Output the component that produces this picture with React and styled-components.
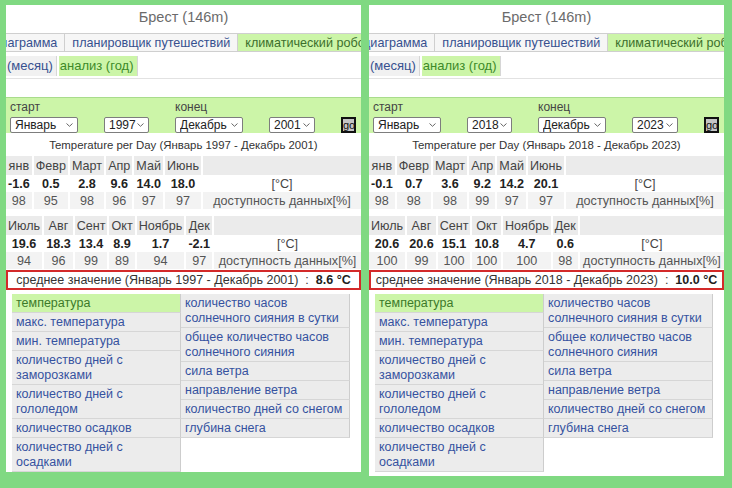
import React from "react";
import styled, { createGlobalStyle } from "styled-components";

const GlobalStyle = createGlobalStyle`
  html, body {
    margin: 0;
    padding: 0;
    background: #80d982;
  }
  body {
    width: 732px;
    height: 488px;
    overflow: hidden;
    font-family: "Liberation Sans", Arial, sans-serif;
  }
`;

const Page = styled.div`
  display: flex;
  align-items: flex-start;
  gap: 8px;
  padding: 5px 0 0 6px;
`;

const Panel = styled.div`
  width: 355px;
  background: #fff;
  overflow: hidden;
  padding-bottom: ${(p) => p.$pad || 0}px;
`;

const Title = styled.div`
  height: 28px;
  padding-top: 2px;
  box-sizing: border-box;
  line-height: 20px;
  text-align: center;
  font-size: 14.5px;
  color: #6b6b6b;
`;

const TabBar = styled.div`
  display: flex;
  height: 18px;
  border-bottom: 1px solid #cfcfcf;
  margin-left: ${(p) => p.$shift}px;
  white-space: nowrap;
`;

const Tab = styled.div`
  flex: none;
  padding: 0 7px;
  line-height: 18px;
  font-size: 12.6px;
  border: 1px solid #cfcfcf;
  border-bottom: none;
  margin-right: -1px;
  background: ${(p) => (p.$active ? "#ccf5a8" : "#f6f6f6")};
  color: ${(p) => (p.$active ? "#3c6f2c" : "#36508f")};
`;

const SubBar = styled.div`
  display: flex;
  gap: 2px;
  height: 20px;
  margin-top: 4px;
  padding-bottom: 2px;
  border-bottom: 1px solid #e2e2e2;
  margin-bottom: 18px;
`;

const SubTab = styled.div`
  padding: 0 3px 0 1px;
  line-height: 20px;
  font-size: 13px;
  background: ${(p) => (p.$active ? "#ccf5a8" : "#f1f1f1")};
  color: ${(p) => (p.$active ? "#3d8a28" : "#36508f")};
  border-right: 1px solid #d6d6d6;
`;

const Form = styled.div`
  display: grid;
  grid-template-columns: 68px 45px 68px 46px 15px;
  column-gap: 26px;
  row-gap: 2px;
  align-items: end;
  height: 36px;
  box-sizing: border-box;
  padding: 2px 0 0 4px;
  background: #ccf5a8;
  border-top: 1px solid #a9dc8c;
`;

const FieldLabel = styled.div`
  grid-column: ${(p) => p.$col};
  grid-row: 1;
  font-size: 12px;
  line-height: 13px;
  color: #454545;
`;

const SelectBox = styled.div`
  grid-row: 2;
  position: relative;
  height: 16px;
`;

const Select = styled.select`
  appearance: none;
  display: block;
  width: 100%;
  height: 16px;
  padding: 0 12px 0 4px;
  font-size: 12px;
  font-family: "Liberation Sans", Arial, sans-serif;
  color: #222;
  background: #fff;
  border: 1px solid #7d7d7d;
  border-radius: 2px;
`;

const Chevron = styled.svg`
  position: absolute;
  right: 5px;
  top: 6px;
  width: 7px;
  height: 4px;
  pointer-events: none;
`;

const GoButton = styled.button`
  grid-row: 2;
  width: 15px;
  height: 16px;
  padding: 0;
  font-size: 11px;
  line-height: 10px;
  font-family: "Liberation Sans", Arial, sans-serif;
  background: #c4c4c4;
  border: 2px solid #111;
  color: #111;
`;

const TableTitle = styled.div`
  margin-top: 2px;
  line-height: 20px;
  text-align: center;
  font-size: 11.4px;
  color: #333;
`;

const Table = styled.table`
  width: 359px;
  border-collapse: separate;
  border-spacing: 2px 0;
  margin: ${(p) => p.$top || 0}px 0 0 -2px;
  font-size: 12.6px;
`;

const Cell = styled.td`
  padding: 0 2px;
  height: ${(p) => (p.$kind === "head" ? 19 : 17)}px;
  text-align: center;
  white-space: nowrap;
  font-weight: ${(p) => (p.$kind === "val" ? "bold" : "normal")};
  background: ${(p) =>
    p.$kind === "head" ? "#ebebeb" : p.$kind === "avail" ? "#f3f3f3" : "#fff"};
  color: ${(p) => (p.$kind === "val" ? "#222" : p.$kind === "avail" ? "#555" : "#444")};
  width: ${(p) => (p.$wide ? "100%" : "auto")};
`;

const Average = styled.div`
  margin-top: 1px;
  height: 20px;
  box-sizing: border-box;
  border: 2px solid #d32a2a;
  line-height: 16px;
  text-align: center;
  font-size: 12.5px;
  color: #333;
  white-space: nowrap;
  b {
    color: #1e1e1e;
  }
`;

const Menu = styled.div`
  display: grid;
  grid-template-columns: 169px 169px;
  align-items: start;
  margin: 4px 0 0 6px;
`;

const MenuColumn = styled.div`
  display: flex;
  flex-direction: column;
`;

const MenuItem = styled.div`
  padding: 2px 4px 1px;
  line-height: 15px;
  font-size: 12.5px;
  background: ${(p) => (p.$active ? "#ccf5a8" : "#ececec")};
  color: ${(p) => (p.$active ? "#3c7a2a" : "#3552a0")};
  border-bottom: 1px solid #d6d6d6;
  border-right: 1px solid #cdcdcd;
`;

const months1 = ["янв", "Февр", "Март", "Апр", "Май", "Июнь"];
const months2 = ["Июль", "Авг", "Сент", "Окт", "Ноябрь", "Дек"];

const leftMenu = [
  "температура",
  "макс. температура",
  "мин. температура",
  "количество дней с заморозками",
  "количество дней с гололедом",
  "количество осадков",
  "количество дней с осадками",
];
const rightMenu = [
  "количество часов солнечного сияния в сутки",
  "общее количество часов солнечного сияния",
  "сила ветра",
  "направление ветра",
  "количество дней со снегом",
  "глубина снега",
];

const panels = [
  {
    from: "1997",
    to: "2001",
    shift: -21,
    pad: 0,
    temp1: ["-1.6", "0.5", "2.8", "9.6", "14.0", "18.0"],
    av1: ["98", "95", "98", "96", "97", "97"],
    temp2: ["19.6", "18.3", "13.4", "8.9", "1.7", "-2.1"],
    av2: ["94", "96", "99", "89", "94", "97"],
    mean: "8.6",
  },
  {
    from: "2018",
    to: "2023",
    shift: -14,
    pad: 4,
    temp1: ["-0.1", "0.7", "3.6", "9.2", "14.2", "20.1"],
    av1: ["98", "98", "98", "99", "97", "97"],
    temp2: ["20.6", "20.6", "15.1", "10.8", "4.7", "0.6"],
    av2: ["100", "99", "100", "100", "100", "98"],
    mean: "10.0",
  },
];

function Dropdown({ value }) {
  return (
    <SelectBox>
      <Select defaultValue={value}>
        <option>{value}</option>
      </Select>
      <Chevron viewBox="0 0 7 4">
        <path d="M0.5 0.5 L3.5 3.3 L6.5 0.5" fill="none" stroke="#666" strokeWidth="1" />
      </Chevron>
    </SelectBox>
  );
}

function MonthTable({ months, temps, avail, top }) {
  return (
    <Table $top={top}>
      <tbody>
        <tr>
          {months.map((m) => (
            <Cell key={m} $kind="head">{m}</Cell>
          ))}
          <Cell $kind="head" $wide />
        </tr>
        <tr>
          {temps.map((t, i) => (
            <Cell key={i} $kind="val">{t}</Cell>
          ))}
          <Cell $kind="plain" $wide>[°C]</Cell>
        </tr>
        <tr>
          {avail.map((a, i) => (
            <Cell key={i} $kind="avail">{a}</Cell>
          ))}
          <Cell $kind="avail" $wide>доступность данных[%]</Cell>
        </tr>
      </tbody>
    </Table>
  );
}

function ClimatePanel({ data }) {
  const range = `(Январь ${data.from} - Декабрь ${data.to})`;
  return (
    <Panel $pad={data.pad}>
      <Title>Брест (146m)</Title>
      <TabBar $shift={data.shift}>
        <Tab>диаграмма</Tab>
        <Tab>планировщик путешествий</Tab>
        <Tab $active>климатический робот</Tab>
      </TabBar>
      <SubBar>
        <SubTab>(месяц)</SubTab>
        <SubTab $active>анализ (год)</SubTab>
      </SubBar>
      <Form>
        <FieldLabel $col={1}>старт</FieldLabel>
        <FieldLabel $col={3}>конец</FieldLabel>
        <Dropdown value="Январь" />
        <Dropdown value={data.from} />
        <Dropdown value="Декабрь" />
        <Dropdown value={data.to} />
        <GoButton>go</GoButton>
      </Form>
      <TableTitle>Temperature per Day {range}</TableTitle>
      <MonthTable months={months1} temps={data.temp1} avail={data.av1} top={1} />
      <MonthTable months={months2} temps={data.temp2} avail={data.av2} top={7} />
      <Average>
        среднее значение {range}&nbsp; :&nbsp; <b>{data.mean} °C</b>
      </Average>
      <Menu>
        <MenuColumn>
          {leftMenu.map((m, i) => (
            <MenuItem key={m} $active={i === 0}>{m}</MenuItem>
          ))}
        </MenuColumn>
        <MenuColumn>
          {rightMenu.map((m) => (
            <MenuItem key={m}>{m}</MenuItem>
          ))}
        </MenuColumn>
      </Menu>
    </Panel>
  );
}

export default function App() {
  return (
    <>
      <GlobalStyle />
      <Page>
        {panels.map((p) => (
          <ClimatePanel key={p.from} data={p} />
        ))}
      </Page>
    </>
  );
}
